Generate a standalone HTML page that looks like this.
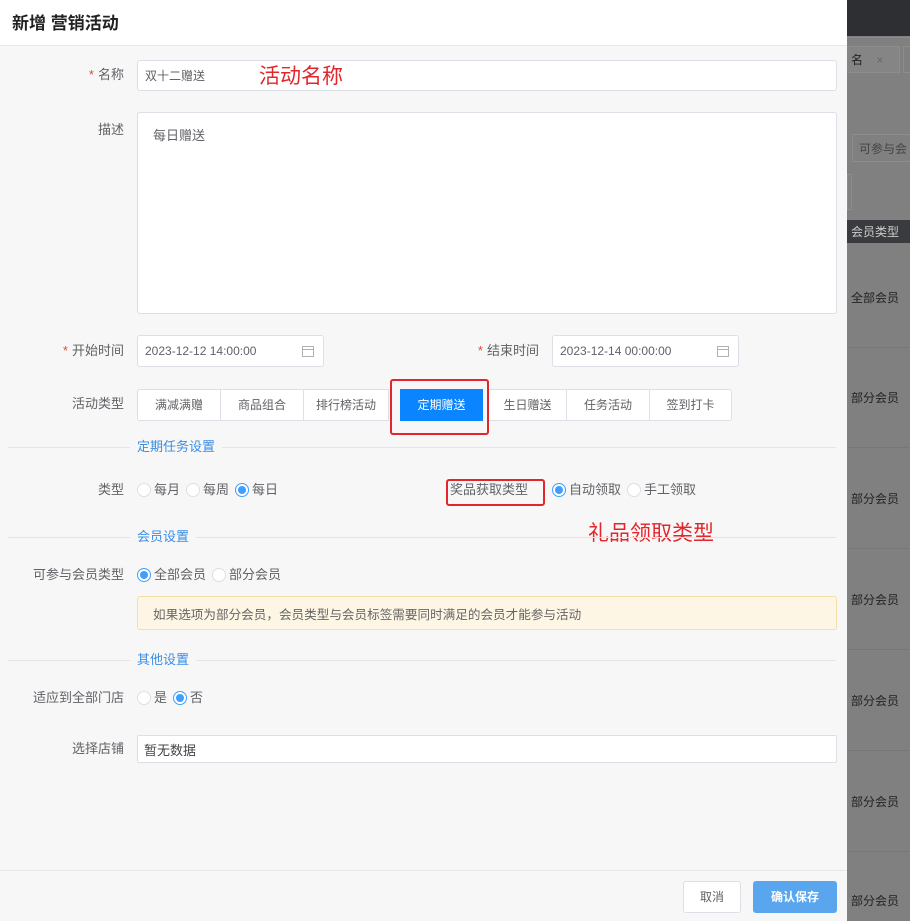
<!DOCTYPE html>
<html><head><meta charset="utf-8"><style>
*{box-sizing:border-box;margin:0;padding:0}
body{width:910px;height:921px;overflow:hidden;position:relative;background:#808080;font-family:"Liberation Sans","Noto Sans CJK SC",sans-serif;font-size:13px;color:#606266}
.a{position:absolute}
.modal{position:absolute;left:0;top:0;width:847px;height:921px;background:#f7f7f7}
.lbl{position:absolute;text-align:right;width:124px;left:0;font-size:13px;color:#606266;line-height:20px}
.lbl i{color:#e04a3a;font-style:normal;margin-right:4px}
.inp{position:absolute;background:#fff;border:1px solid #dcdfe6;border-radius:3px;color:#606266;font-size:12px}
.btn{position:absolute;top:389px;height:32px;background:#fff;border:1px solid #dcdfe6;text-align:center;line-height:30px;font-size:12px;color:#606266}
.div{position:absolute;left:8px;width:828px;height:1px;background:#e4e4e4}
.sec{position:absolute;left:130px;padding:0 7px;background:#f7f7f7;color:#3a8ee6;font-size:13px;line-height:20px}
.r{display:inline-block;width:14px;height:14px;border:1px solid #dcdfe6;border-radius:50%;background:#fff;vertical-align:-3px;margin-right:3px;position:relative}
.r.on{border-color:#409eff}
.r.on:after{content:"";position:absolute;left:2px;top:2px;width:8px;height:8px;border-radius:50%;background:#409eff}
.rg{position:absolute;font-size:13px;color:#606266;line-height:20px;white-space:nowrap}
.rg span.t{margin-right:6px}
.red{position:absolute;border:2.5px solid #e3262b;border-radius:3px}
.cal{position:absolute;width:12px;height:11px;border:1px solid #b0b0b0;top:10px}
.cal:before{content:"";position:absolute;left:0;right:0;top:2px;height:1px;background:#b0b0b0}
.rt{position:absolute;left:851px;color:#222;font-size:12px}
.rl{position:absolute;left:847px;width:63px;height:1px;background:#777}
</style></head><body>
<div class="a" style="left:847px;top:0;width:63px;height:36px;background:#2e2f33"></div>
<div class="a" style="left:847px;top:37px;width:63px;height:1px;background:#8a8a8a"></div>
<div class="a" style="left:840px;top:46px;width:60px;height:27px;border:1px solid #8c8c8c;background:#858585"></div>
<div class="rt" style="top:51px">名 <span style="margin-left:10px;color:#666">×</span></div>
<div class="a" style="left:903px;top:46px;width:10px;height:27px;border:1px solid #8c8c8c"></div>
<div class="a" style="left:852px;top:134px;width:70px;height:28px;border:1px solid #8c8c8c"></div>
<div class="rt" style="left:859px;top:140px;color:#444">可参与会</div>
<div class="a" style="left:847px;top:174px;width:5px;height:36px;border:1px solid #8c8c8c"></div>
<div class="a" style="left:847px;top:220px;width:63px;height:23px;background:#3a3b3f"></div>
<div class="rt" style="top:223px;color:#ccc">会员类型</div>
<div class="rt" style="top:289px">全部会员</div>
<div class="rl" style="top:347px"></div>
<div class="rt" style="top:389px">部分会员</div>
<div class="rl" style="top:447px"></div>
<div class="rt" style="top:490px">部分会员</div>
<div class="rl" style="top:548px"></div>
<div class="rt" style="top:591px">部分会员</div>
<div class="rl" style="top:649px"></div>
<div class="rt" style="top:692px">部分会员</div>
<div class="rl" style="top:750px"></div>
<div class="rt" style="top:793px">部分会员</div>
<div class="rl" style="top:851px"></div>
<div class="rt" style="top:892px">部分会员</div>

<div class="modal">
<div class="a" style="left:0;top:0;width:847px;height:46px;background:#fff;border-bottom:1px solid #e8e8e8"></div>
<div class="a" style="left:12px;top:9px;font-size:17px;font-weight:bold;color:#222">新增 营销活动</div>

<div class="lbl" style="top:65px"><i>*</i>名称</div>
<div class="inp" style="left:137px;top:60px;width:700px;height:31px;padding:6px 7px">双十二赠送</div>
<div class="a" style="left:259px;top:64px;font-size:21px;color:#e3262b;line-height:26px">活动名称</div>

<div class="lbl" style="top:120px">描述</div>
<div class="inp" style="left:137px;top:112px;width:700px;height:202px;padding:12px 15px;font-size:13px">每日赠送</div>

<div class="lbl" style="top:341px"><i>*</i>开始时间</div>
<div class="inp" style="left:137px;top:335px;width:187px;height:32px;padding:8px 7px">2023-12-12 14:00:00<div class="cal" style="left:164px"></div></div>
<div class="lbl" style="top:341px;width:539px"><i>*</i>结束时间</div>
<div class="inp" style="left:552px;top:335px;width:187px;height:32px;padding:8px 7px">2023-12-14 00:00:00<div class="cal" style="left:164px"></div></div>

<div class="lbl" style="top:394px">活动类型</div>
<div class="btn" style="left:137px;width:84px;border-radius:3px 0 0 3px">满减满赠</div>
<div class="btn" style="left:220px;width:84px">商品组合</div>
<div class="btn" style="left:303px;width:86px">排行榜活动</div>
<div class="btn" style="left:400px;width:83px;background:#0a84ff;border-color:#0a84ff;color:#fff">定期赠送</div>
<div class="btn" style="left:488px;width:79px">生日赠送</div>
<div class="btn" style="left:566px;width:84px">任务活动</div>
<div class="btn" style="left:649px;width:83px;border-radius:0 3px 3px 0">签到打卡</div>
<div class="red" style="left:390px;top:379px;width:99px;height:56px"></div>

<div class="div" style="top:447px"></div>
<div class="sec" style="top:437px">定期任务设置</div>

<div class="lbl" style="top:480px">类型</div>
<div class="rg" style="left:137px;top:480px"><span class="r"></span><span class="t">每月</span><span class="r"></span><span class="t">每周</span><span class="r on"></span>每日</div>
<div class="a" style="left:450px;top:480px;font-size:13px;color:#606266;line-height:20px">奖品获取类型</div>
<div class="red" style="left:446px;top:479px;width:99px;height:27px"></div>
<div class="rg" style="left:552px;top:480px"><span class="r on"></span><span class="t">自动领取</span><span class="r"></span>手工领取</div>
<div class="a" style="left:588px;top:521px;font-size:21px;color:#e3262b;line-height:26px">礼品领取类型</div>

<div class="div" style="top:537px"></div>
<div class="sec" style="top:527px">会员设置</div>

<div class="lbl" style="top:565px">可参与会员类型</div>
<div class="rg" style="left:137px;top:565px"><span class="r on"></span><span class="t">全部会员</span><span class="r"></span>部分会员</div>
<div class="a" style="left:137px;top:596px;width:700px;height:34px;background:#fdf6e5;border:1px solid #f5dfa8;border-radius:3px;padding:7px 15px;font-size:12.6px;color:#666;white-space:nowrap">如果选项为部分会员，会员类型与会员标签需要同时满足的会员才能参与活动</div>

<div class="div" style="top:660px"></div>
<div class="sec" style="top:650px">其他设置</div>

<div class="lbl" style="top:688px">适应到全部门店</div>
<div class="rg" style="left:137px;top:688px"><span class="r"></span><span class="t">是</span><span class="r on"></span>否</div>

<div class="lbl" style="top:739px">选择店铺</div>
<div class="inp" style="left:137px;top:735px;width:700px;height:28px;padding:4px 6px;font-size:13px;color:#444;border-radius:2px">暂无数据</div>

<div class="a" style="left:0;top:870px;width:847px;height:1px;background:#e8e8e8"></div>
<div class="a" style="left:683px;top:881px;width:58px;height:32px;background:#fff;border:1px solid #dcdfe6;border-radius:3px;text-align:center;line-height:30px;font-size:12px;color:#606266">取消</div>
<div class="a" style="left:753px;top:881px;width:84px;height:32px;background:#59a6ef;border-radius:3px;text-align:center;line-height:32px;font-size:12px;color:#fff;font-weight:bold">确认保存</div>
</div>
</body></html>
